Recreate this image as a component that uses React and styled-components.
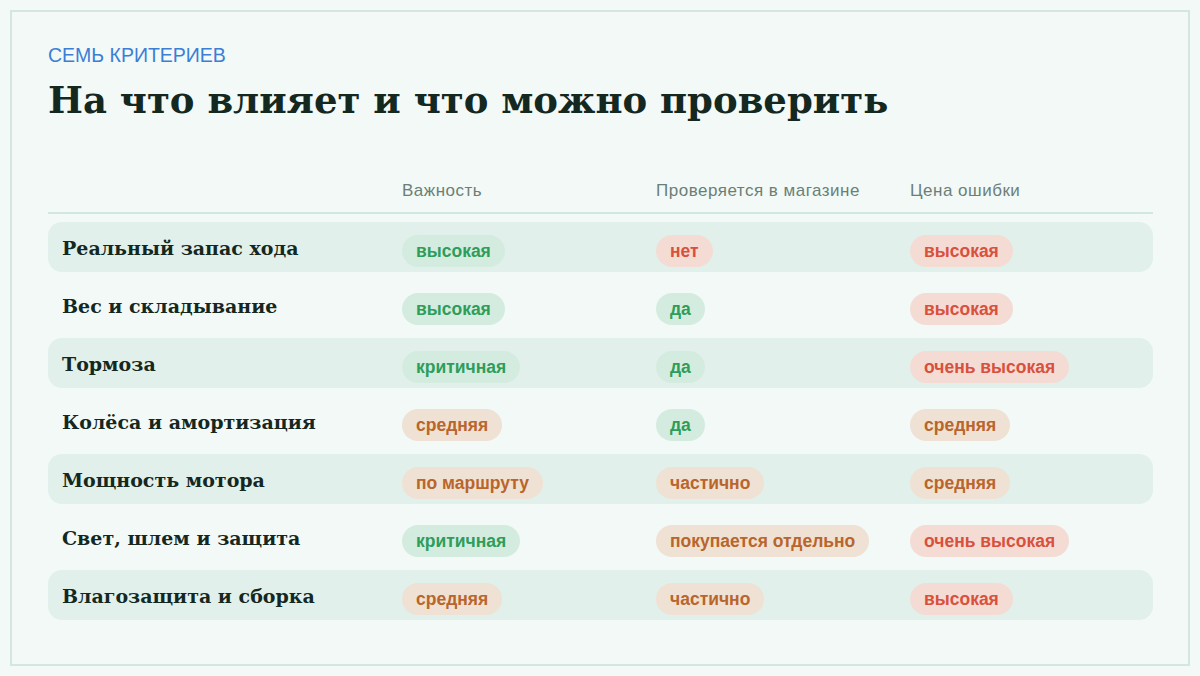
import styled, { createGlobalStyle } from "styled-components";

const GlobalStyle = createGlobalStyle`
    html, body {
        margin: 0;
        padding: 0;
        background: #f2f9f7;
    }
`;

const tones = {
    good: { color: "#2e9d5a", background: "#d4ecdf" },
    bad: { color: "#d9503c", background: "#f4dcd5" },
    mid: { color: "#b9652b", background: "#efe1d3" },
};

const rows = [
    ["Реальный запас хода", ["высокая", "good"], ["нет", "bad"], ["высокая", "bad"]],
    ["Вес и складывание", ["высокая", "good"], ["да", "good"], ["высокая", "bad"]],
    ["Тормоза", ["критичная", "good"], ["да", "good"], ["очень высокая", "bad"]],
    ["Колёса и амортизация", ["средняя", "mid"], ["да", "good"], ["средняя", "mid"]],
    ["Мощность мотора", ["по маршруту", "mid"], ["частично", "mid"], ["средняя", "mid"]],
    ["Свет, шлем и защита", ["критичная", "good"], ["покупается отдельно", "mid"], ["очень высокая", "bad"]],
    ["Влагозащита и сборка", ["средняя", "mid"], ["частично", "mid"], ["высокая", "bad"]],
];

const Frame = styled.section`
    box-sizing: border-box;
    width: 1180px;
    height: 656px;
    margin: 10px;
    padding: 31px 35px 0 36px;
    border: 2px solid #d1e7e0;
    background: #f2f9f7;
`;

const Eyebrow = styled.div`
    font-family: "Liberation Sans", Arial, sans-serif;
    font-size: 19.5px;
    line-height: 24px;
    color: #3b7ed6;
`;

const Title = styled.h1`
    margin: 9px 0 0;
    font-family: "DejaVu Serif", Georgia, serif;
    font-weight: 700;
    font-size: 37px;
    line-height: 48px;
    color: #14281f;
`;

const Table = styled.div`
    margin-top: 56px;
    display: flex;
    flex-direction: column;
    gap: 8px;
`;

const Grid = styled.div`
    display: grid;
    grid-template-columns: 340px 254px 254px 1fr;
    align-items: center;
    padding-left: 14px;
`;

const HeadRow = styled(Grid)`
    height: 22px;
    padding-bottom: 10px;
    border-bottom: 2px solid #d1e7e0;
    font-family: "Liberation Sans", Arial, sans-serif;
    font-size: 17px;
    letter-spacing: 0.5px;
    color: #6b7f78;
`;

const Row = styled(Grid)`
    height: 50px;
    border-radius: 14px;
    background: ${(p) => (p.$shaded ? "#e1f0ea" : "transparent")};
`;

const Label = styled.div`
    margin-top: 2px;
    font-family: "DejaVu Serif", Georgia, serif;
    font-weight: 700;
    font-size: 19px;
    color: #14281f;
`;

const Pill = styled.span`
    justify-self: start;
    display: inline-flex;
    align-items: center;
    height: 32px;
    margin-top: 8px;
    padding: 0 14px;
    border-radius: 16px;
    font-family: "Liberation Sans", Arial, sans-serif;
    font-weight: 700;
    font-size: 17.5px;
    color: ${(p) => tones[p.$tone].color};
    background: ${(p) => tones[p.$tone].background};
`;

export default function App() {
    return (
        <>
            <GlobalStyle />
            <Frame>
                <Eyebrow>СЕМЬ КРИТЕРИЕВ</Eyebrow>
                <Title>На что влияет и что можно проверить</Title>
                <Table>
                    <HeadRow>
                        <span />
                        <span>Важность</span>
                        <span>Проверяется в магазине</span>
                        <span>Цена ошибки</span>
                    </HeadRow>
                    {rows.map(([label, ...cells], i) => (
                        <Row key={label} $shaded={i % 2 === 0}>
                            <Label>{label}</Label>
                            {cells.map(([text, tone], j) => (
                                <Pill key={j} $tone={tone}>
                                    {text}
                                </Pill>
                            ))}
                        </Row>
                    ))}
                </Table>
            </Frame>
        </>
    );
}
